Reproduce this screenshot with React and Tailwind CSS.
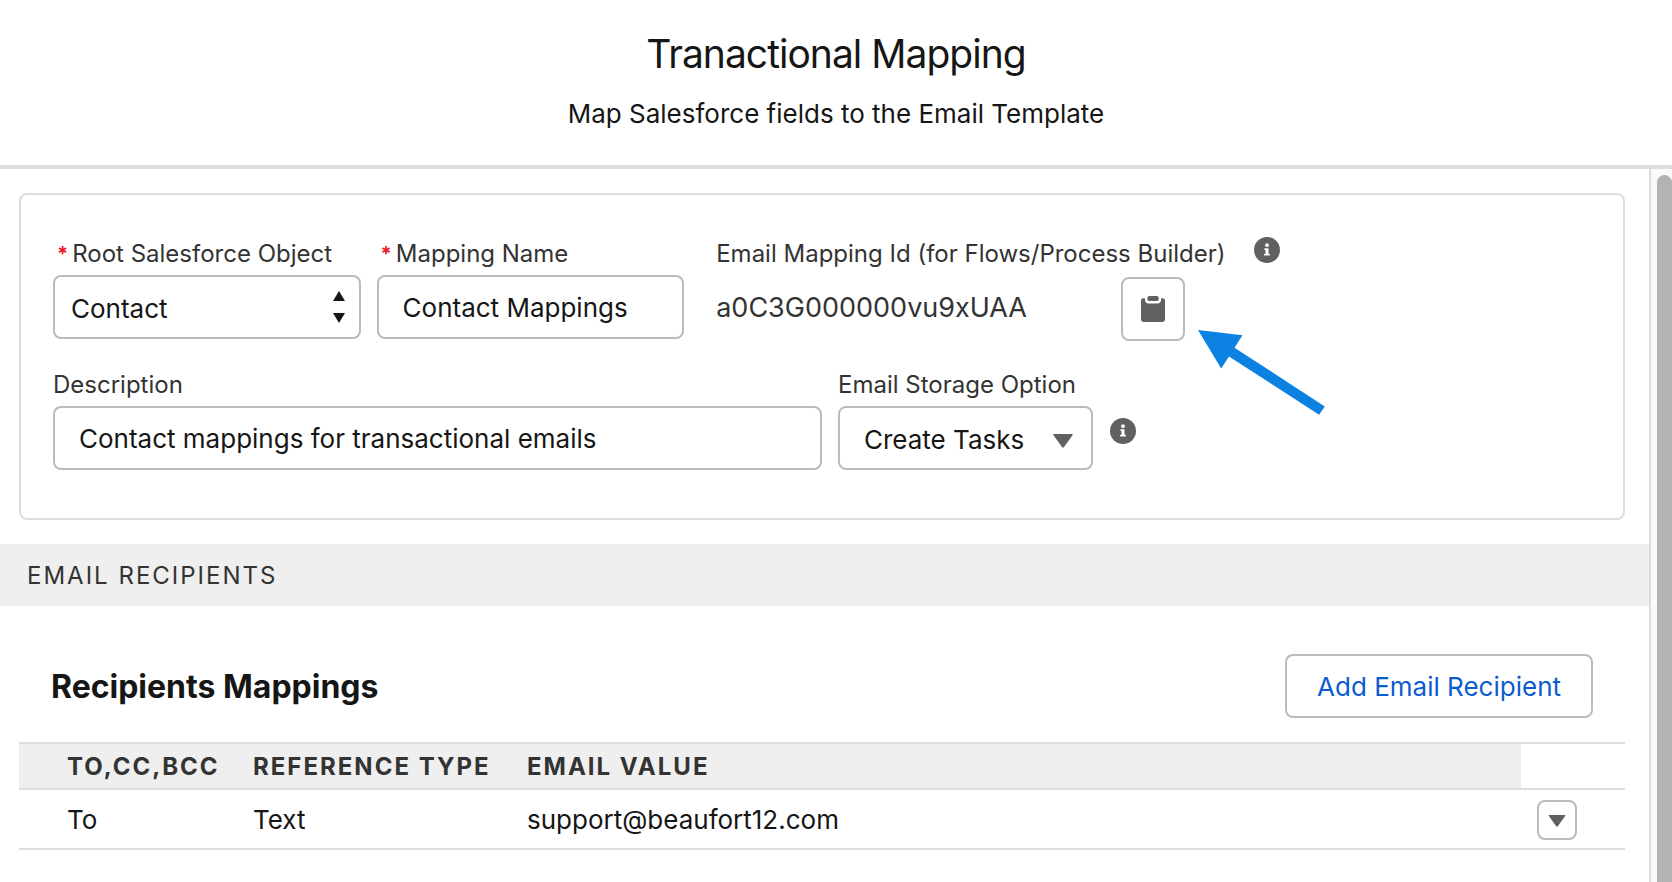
const caret = "M1 0h18q1.500 0 .5 1.200L11 13q-1 1-2 0L.5 1.200Q-.5 0 1 0z";

const controlClass =
    "h-16 w-full rounded-lg border-2 border-[#bbb] bg-white text-[26px] text-[#161616] outline-none";

const InfoIcon = () => (
    <svg viewBox="0 0 26 26" className="h-[26px] w-[26px] shrink-0">
        <circle cx="13" cy="13" r="13" fill="#606060" />
        <circle cx="13" cy="8.200" r="1.900" fill="#fff" />
        <path
            d="M11 11.200h2.800q.7 0 .7.700v4.900h.8q.6 0 .6.600v.6q0 .6-.6.600h-4.600q-.6 0-.6-.6v-.6q0-.6.600-.6h.8v-3.800H11q-.6 0-.6-.6v-.6q0-.6.600-.6z"
            fill="#fff"
        />
    </svg>
);

const ClipboardIcon = () => (
    <svg viewBox="0 0 24 26" className="h-[26px] w-6" fill="#606060">
        <path d="M8.200 0h7.600q1.800 0 1.800 1.800v1.400q0 1.800-1.800 1.800H8.200q-1.800 0-1.800-1.800V1.800Q6.400 0 8.200 0z" />
        <path d="M2.400 2.200h1.300q.3 0 .3.300v1.300q0 3.600 3.600 3.600h8.800q3.600 0 3.600-3.600V2.500q0-.3.300-.3h1.300q2.400 0 2.400 2.400v19q0 2.400-2.400 2.400H2.400Q0 26 0 23.600v-19q0-2.400 2.400-2.400z" />
    </svg>
);

const Label = ({ htmlFor, required, children }) => (
    <label
        htmlFor={htmlFor}
        className={`flex items-center text-2xl leading-[34px] whitespace-nowrap text-[#333] ${required ? "pl-1" : ""}`}
    >
        {required && <span className="mr-1 text-xl leading-8 font-bold text-[#e8192c]">*</span>}
        {children}
    </label>
);

const recipients = [{ target: "To", type: "Text", value: "support@beaufort12.com" }];

const App = () => {
    return (
        <div className="flex min-h-screen flex-col bg-white font-['Inter',sans-serif] text-[#161616]">
            <header className="border-b-4 border-[#ddd] pt-7 pb-[33px] text-center">
                <h1 className="text-[39px] leading-[52px] tracking-tight">Tranactional Mapping</h1>
                <p className="mt-4 text-[26px] leading-9">Map Salesforce fields to the Email Template</p>
            </header>

            <div className="flex flex-1">
                <main className="min-w-0 flex-1 pt-6">
                    {/* Mapping details */}
                    <section className="mr-6 ml-[19px] rounded-lg border-2 border-[#ddd] px-8 pt-[42px] pb-12">
                        <div className="flex items-start">
                            <div className="w-1/5">
                                <Label htmlFor="root-object" required>Root Salesforce Object</Label>
                                <div className="relative mt-1">
                                    <select id="root-object" className={`${controlClass} appearance-none px-4 pt-0.5`}>
                                        <option>Contact</option>
                                    </select>
                                    <svg
                                        viewBox="0 0 12 32"
                                        fill="#161616"
                                        className="pointer-events-none absolute top-4 right-4 h-8 w-3"
                                    >
                                        <path d="M6 0l6 10H0zM6 32l6-10H0z" />
                                    </svg>
                                </div>
                            </div>

                            <div className="ml-4 w-1/5">
                                <Label htmlFor="mapping-name" required>Mapping Name</Label>
                                <input
                                    id="mapping-name"
                                    type="text"
                                    defaultValue="Contact Mappings"
                                    className={`${controlClass} mt-1 px-6`}
                                />
                            </div>

                            <div className="ml-8 w-[502px]">
                                <Label htmlFor="mapping-id">Email Mapping Id (for Flows/Process Builder)</Label>
                                <div className="flex items-start">
                                    <output
                                        id="mapping-id"
                                        className="mt-1 w-[405px] text-[27px] leading-[66px] text-[#333]"
                                    >
                                        a0C3G000000vu9xUAA
                                    </output>
                                    <button
                                        type="button"
                                        aria-label="Copy"
                                        className="mt-1.5 flex h-16 w-16 items-center justify-center rounded-lg border-2 border-[#bbb]"
                                    >
                                        <ClipboardIcon />
                                    </button>
                                    <div className="relative">
                                        <svg
                                            viewBox="0 0 130 88"
                                            fill="#0b82e1"
                                            className="pointer-events-none absolute top-14 left-3 h-[88px] w-[130px]"
                                        >
                                            <path d="M1 3l44.500 5.200-8 12.500L127.800 79.500l-5.700 8.200L32 29.500l-7.800 12z" />
                                        </svg>
                                    </div>
                                </div>
                            </div>

                            <div className="ml-9">
                                <InfoIcon />
                            </div>
                        </div>

                        <div className="mt-[27px] flex items-start">
                            <div className="w-1/2">
                                <Label htmlFor="description">Description</Label>
                                <input
                                    id="description"
                                    type="text"
                                    defaultValue="Contact mappings for transactional emails"
                                    className={`${controlClass} mt-1 px-6`}
                                />
                            </div>

                            <div className="ml-4 w-[255px]">
                                <Label htmlFor="storage">Email Storage Option</Label>
                                <div className="relative mt-1">
                                    <select id="storage" className={`${controlClass} appearance-none px-6 pt-0.5`}>
                                        <option>Create Tasks</option>
                                    </select>
                                    <svg
                                        viewBox="0 0 20 14"
                                        fill="#606060"
                                        className="pointer-events-none absolute top-7 right-5 h-3.5 w-5"
                                    >
                                        <path d={caret} />
                                    </svg>
                                </div>
                            </div>

                            <div className="mt-[50px] ml-[17px]">
                                <InfoIcon />
                            </div>
                        </div>
                    </section>

                    {/* Recipients */}
                    <h2 className="mt-6 bg-[#efefef] px-[27px] pt-4 pb-3.5 text-2xl leading-8 tracking-[2px] text-[#333]">
                        EMAIL RECIPIENTS
                    </h2>

                    <div className="mt-12 flex items-center justify-between pr-14 pl-[51px]">
                        <h3 className="pt-0.5 text-[32px] leading-10 font-bold">Recipients Mappings</h3>
                        <button
                            type="button"
                            className="h-16 rounded-lg border-2 border-[#bbb] px-[30px] text-[26px] text-[#0b5cce]"
                        >
                            Add Email Recipient
                        </button>
                    </div>

                    <div className="mt-6 mr-6 ml-[19px]">
                        <table className="w-full table-fixed border-collapse text-left">
                            <thead>
                                <tr className="h-[46px] border-y-2 border-[#ddd] text-2xl leading-8 tracking-[2px] text-[#333]">
                                    <th scope="col" className="w-[218px] bg-[#efefef] pt-0.5 pl-12 font-bold">TO,CC,BCC</th>
                                    <th scope="col" className="w-[274px] bg-[#efefef] pt-0.5 pl-4 font-bold whitespace-nowrap">REFERENCE TYPE</th>
                                    <th scope="col" className="bg-[#efefef] pt-0.5 pl-4 font-bold">EMAIL VALUE</th>
                                    <td className="w-[104px]"></td>
                                </tr>
                            </thead>
                            <tbody>
                                {recipients.map((row) => (
                                    <tr key={row.value} className="h-[60px] border-b-2 border-[#ddd] text-[26px] leading-9">
                                        <td className="pt-0.5 pl-12">{row.target}</td>
                                        <td className="pt-0.5 pl-4">{row.type}</td>
                                        <td className="pt-0.5 pl-4">{row.value}</td>
                                        <td className="pt-0.5 pl-4">
                                            <button
                                                type="button"
                                                aria-label="Row actions"
                                                className="flex h-10 w-10 items-center justify-center rounded-lg border-2 border-[#bbb]"
                                            >
                                                <svg viewBox="0 0 20 14" fill="#606060" className="mt-0.5 h-3 w-[18px]">
                                                    <path d={caret} />
                                                </svg>
                                            </button>
                                        </td>
                                    </tr>
                                ))}
                            </tbody>
                        </table>
                    </div>
                </main>

                {/* Scroll track */}
                <div className="flex w-[23px] border-l-2 border-[#ddd] bg-[#fafafa] pt-1.5 pl-1.5">
                    <div className="flex-1 rounded-t-lg bg-[#b3b3b3]"></div>
                </div>
            </div>
        </div>
    );
};

export default App;
